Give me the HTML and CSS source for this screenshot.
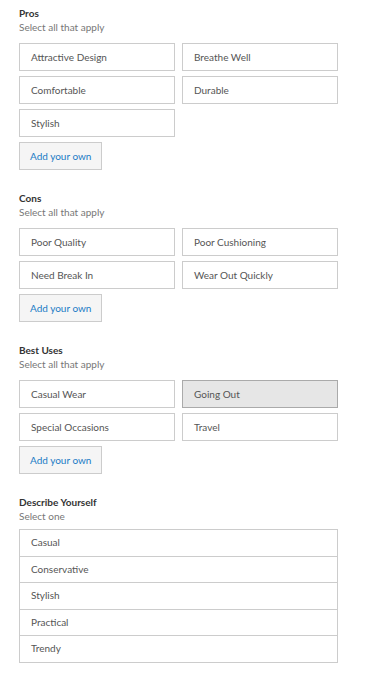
FILE: index.html
```html
<!DOCTYPE html>
<html lang="en">
<head>
    <meta charset="UTF-8">
    <meta name="viewport" content="width=device-width, initial-scale=1.0">
    <title>Review Attributes</title>
    <link rel="stylesheet" href="styles.css">
</head>
<body>

<div class="form">
    <div class="section">
        <div class="title">Pros</div>
        <div class="sub">Select all that apply</div>
        <div class="chips">
            <button class="chip">Attractive Design</button>
            <button class="chip">Breathe Well</button>
            <button class="chip">Comfortable</button>
            <button class="chip">Durable</button>
            <button class="chip">Stylish</button>
        </div>
        <button class="add-btn">Add your own</button>
    </div>

    <div class="section">
        <div class="title">Cons</div>
        <div class="sub">Select all that apply</div>
        <div class="chips">
            <button class="chip">Poor Quality</button>
            <button class="chip">Poor Cushioning</button>
            <button class="chip">Need Break In</button>
            <button class="chip">Wear Out Quickly</button>
        </div>
        <button class="add-btn">Add your own</button>
    </div>

    <div class="section">
        <div class="title">Best Uses</div>
        <div class="sub">Select all that apply</div>
        <div class="chips">
            <button class="chip">Casual Wear</button>
            <button class="chip selected">Going Out</button>
            <button class="chip">Special Occasions</button>
            <button class="chip">Travel</button>
        </div>
        <button class="add-btn">Add your own</button>
    </div>

    <div class="section">
        <div class="title">Describe Yourself</div>
        <div class="sub">Select one</div>
        <div class="list">
            <div class="list-item">Casual</div>
            <div class="list-item">Conservative</div>
            <div class="list-item">Stylish</div>
            <div class="list-item">Practical</div>
            <div class="list-item">Trendy</div>
        </div>
    </div>
</div>

</body>
</html>
```

FILE: styles.css
```css
body {
    margin: 0;
    padding: 0;
    background-color: white;
    font-family: 'Lato', 'Open Sans', sans-serif;
    color: #555;
}
.form {
    padding: 6px 31px 13px 19px;
}
.section {
    margin-bottom: 21px;
}
.title {
    font-size: 10px;
    font-weight: 700;
    line-height: 14px;
    color: #333;
}
.sub {
    font-size: 10px;
    line-height: 14px;
    color: #777;
}
.chips {
    display: grid;
    grid-template-columns: 1fr 1fr;
    column-gap: 7px;
    row-gap: 5px;
    margin-top: 9px;
}
.chip, .add-btn {
    box-sizing: border-box;
    height: 28px;
    padding: 0 11px;
    border: 1px solid #ccc;
    background: white;
    font-family: inherit;
    font-size: 10px;
    color: #555;
    text-align: left;
    white-space: nowrap;
    cursor: pointer;
}
.chip.selected {
    background-color: #e6e6e6;
    border-color: #aaa;
}
.add-btn {
    display: block;
    width: 83px;
    margin-top: 5px;
    padding: 0 10px;
    background-color: #f5f5f5;
    color: #1a7bc5;
}
.list {
    margin-top: 6px;
    border: 1px solid #ccc;
}
.list-item {
    height: 25.5px;
    line-height: 25.5px;
    padding: 0 11px;
    font-size: 10px;
    color: #555;
    border-top: 1px solid #ccc;
}
.list-item:first-child {
    border-top: none;
}
```
